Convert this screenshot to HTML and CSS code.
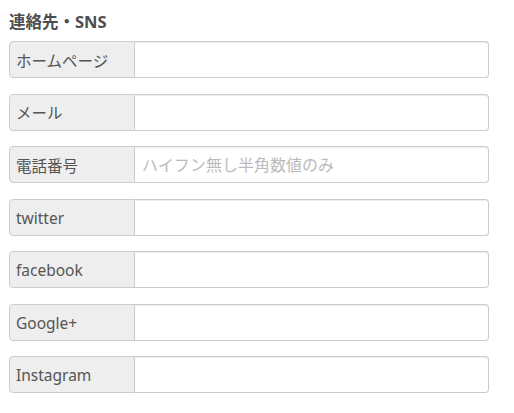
FILE: index.html
```html
<!DOCTYPE html>
<html lang="ja">
<head>
  <meta charset="UTF-8" />
  <meta name="viewport" content="width=device-width, initial-scale=1.0"/>
  <title>連絡先・SNS</title>
  <link rel="stylesheet" href="styles.css">
</head>
<body>
  <div class="container">
    <h3>連絡先・SNS</h3>
    <form id="contactForm">
      <div class="input-group"><label for="homepage">ホームページ</label><input type="url" id="homepage" /></div>
      <div class="input-group"><label for="mail">メール</label><input type="email" id="mail" /></div>
      <div class="input-group"><label for="tel">電話番号</label><input type="tel" id="tel" placeholder="ハイフン無し半角数値のみ" /></div>
      <div class="input-group"><label for="twitter">twitter</label><input type="text" id="twitter" /></div>
      <div class="input-group"><label for="facebook">facebook</label><input type="text" id="facebook" /></div>
      <div class="input-group"><label for="google">Google+</label><input type="text" id="google" /></div>
      <div class="input-group"><label for="instagram">Instagram</label><input type="text" id="instagram" /></div>
    </form>
  </div>
</body>
</html>
```

FILE: styles.css
```css
body {
  margin: 0;
  background: #fff;
  font-family: "Noto Sans", "Noto Sans CJK JP", sans-serif;
  color: #555;
}

.container {
  width: 480px;
  padding: 11px 0 0 9px;
}

h3 {
  margin: 0 0 8px;
  font-size: 16.5px;
  line-height: 22px;
  font-weight: bold;
  color: #4d4d4d;
}

.input-group {
  display: flex;
  height: 37px;
  margin-bottom: 15.5px;
}

.input-group label {
  box-sizing: border-box;
  width: 126px;
  display: flex;
  align-items: center;
  padding: 1px 6px 0;
  background: #eee;
  border: 1px solid #ccc;
  border-radius: 4px 0 0 4px;
  font-size: 15.5px;
  color: #555;
}

.input-group input {
  flex: 1;
  min-width: 0;
  box-sizing: border-box;
  height: 100%;
  margin: 0;
  padding: 0 7px;
  border: 1px solid #ccc;
  border-left: 0;
  border-radius: 0 4px 4px 0;
  box-shadow: inset 0 1px 1px rgba(0,0,0,0.075);
  font-family: inherit;
  font-size: 16px;
  color: #555;
  outline: none;
}

.input-group input::placeholder {
  color: #bbb;
}
```
